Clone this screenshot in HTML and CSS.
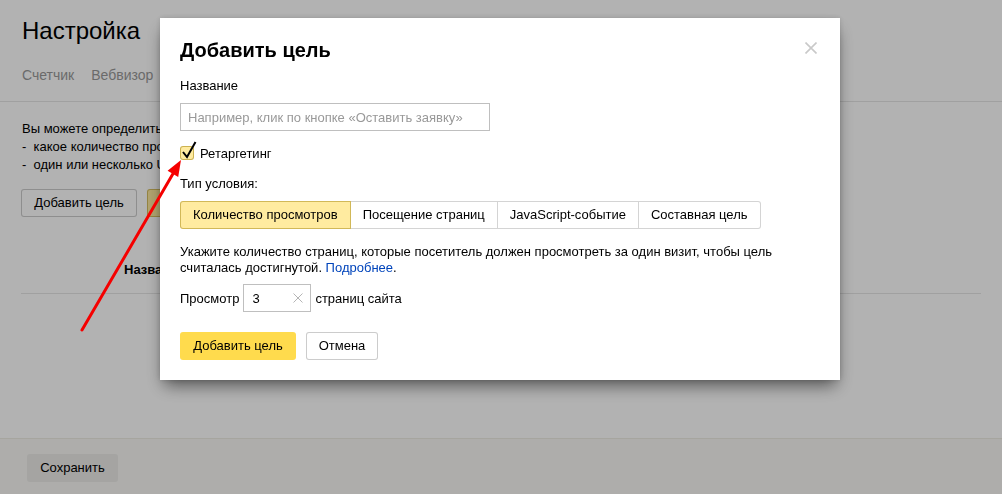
FILE: index.html
```html
<!DOCTYPE html>
<html lang="ru">
<head>
<meta charset="utf-8">
<title>Настройка — цели</title>
<link rel="stylesheet" href="styles.css">
</head>
<body>
<div class="page">
  <header class="head">
    <h1 class="head-title">Настройка</h1>
    <nav class="head-tabs">
      <span class="head-tab">Счетчик</span>
      <span class="head-tab">Вебвизор</span>
      <span class="head-tab">Цели</span>
      <span class="head-tab">Фильтры</span>
    </nav>
  </header>
  <main class="content">
    <p class="intro">Вы можете определить цели, достижение которых будет означать, что сайт работает эффективно:<br>-&nbsp; какое количество просмотров страниц должен совершить посетитель;<br>-&nbsp; один или несколько URL страниц, которые должен посетить посетитель.</p>
    <div class="actions">
      <button class="btn btn-add">Добавить цель</button>
      <button class="btn btn-soft">Добавить составную цель</button>
    </div>
    <div class="table-head"><span class="th">Название</span></div>
  </main>
  <footer class="foot">
    <button class="btn btn-gray">Сохранить</button>
  </footer>
</div>

<div class="overlay">
  <div class="modal">
    <button class="modal-close" aria-label="Закрыть">
      <svg width="12" height="12" viewBox="0 0 12 12"><path d="M0.5 0.5 L11.5 11.5 M11.5 0.5 L0.5 11.5" stroke="#c9c9c9" stroke-width="1.6" fill="none"/></svg>
    </button>
    <h2 class="modal-title">Добавить цель</h2>
    <div class="label">Название</div>
    <div class="input input-wide"><span class="placeholder">Например, клик по кнопке «Оставить заявку»</span></div>
    <label class="check">
      <span class="check-box">
        <svg class="check-mark" width="18" height="20" viewBox="0 0 18 20"><path d="M3 11 L7 16 L15.5 1" stroke="#000" stroke-width="2" fill="none" stroke-linejoin="miter"/></svg>
      </span>
      <span class="check-text">Ретаргетинг</span>
    </label>
    <div class="label label-type">Тип условия:</div>
    <div class="seg">
      <span class="seg-item seg-on">Количество просмотров</span>
      <span class="seg-item">Посещение страниц</span>
      <span class="seg-item">JavaScript-событие</span>
      <span class="seg-item">Составная цель</span>
    </div>
    <p class="desc">Укажите количество страниц, которые посетитель должен просмотреть за один визит, чтобы цель считалась достигнутой. <a class="link" href="#">Подробнее</a>.</p>
    <div class="views">
      <span>Просмотр</span>
      <div class="input input-small">
        <span class="value">3</span>
        <svg class="clear" width="10" height="10" viewBox="0 0 10 10"><path d="M0.5 0.5 L9.5 9.5 M9.5 0.5 L0.5 9.5" stroke="#b5b5b5" stroke-width="1" fill="none"/></svg>
      </div>
      <span>страниц сайта</span>
    </div>
    <div class="modal-actions">
      <button class="btn btn-yellow">Добавить цель</button>
      <button class="btn btn-white">Отмена</button>
    </div>
  </div>
</div>

<svg class="annotation" width="1002" height="494" viewBox="0 0 1002 494">
  <line x1="82" y1="330" x2="174" y2="172" stroke="#f50000" stroke-width="3" stroke-linecap="round"/>
  <polygon points="181,160 178.2,177 167.6,170.8" fill="#f50000"/>
</svg>
</body>
</html>
```

FILE: styles.css
```css
* { box-sizing: border-box; }

html, body {
  margin: 0;
  padding: 0;
  height: 100%;
}

body {
  font-family: "Liberation Sans", Arial, sans-serif;
  font-size: 13px;
  color: #000;
  background: #fff;
  overflow: hidden;
}

.page {
  display: flex;
  flex-direction: column;
  height: 100vh;
}

.head {
  height: 102px;
  border-bottom: 1px solid #e5e5e5;
  padding: 17px 22px 0;
  flex: none;
}

.head-title {
  margin: 0;
  font-size: 24px;
  font-weight: normal;
  line-height: 28px;
}

.head-tabs {
  display: flex;
  gap: 17px;
  margin-top: 22px;
  font-size: 14px;
  line-height: 16px;
  color: #999;
}

.content {
  flex: 1;
  padding: 18px 21px 0;
}

.intro {
  margin: 0;
  line-height: 18px;
  padding-left: 1px;
  white-space: nowrap;
}

.actions {
  display: flex;
  gap: 10px;
  margin-top: 15px;
}

.btn {
  font-family: inherit;
  font-size: 13px;
  height: 28px;
  padding: 0 13px;
  border-radius: 3px;
  border: 1px solid rgba(0,0,0,0.2);
  background: #fff;
  color: #000;
  line-height: 26px;
  cursor: pointer;
}

.btn-add {
  width: 116px;
  padding: 0;
}

.btn-soft {
  background: #ffeba0;
  border-color: rgba(153,122,0,0.4);
}

.table-head {
  margin-top: 30px;
  height: 47px;
  line-height: 46px;
  border-bottom: 1px solid #e5e5e5;
  padding-left: 103px;
}

.th { font-weight: bold; }

.foot {
  flex: none;
  height: 56px;
  background: #f9f8f5;
  border-top: 1px solid #eeede4;
  padding: 15px 27px 0;
}

.btn-gray {
  width: 91px;
  background: #ecebe9;
  border-color: transparent;
  padding: 0;
}

/* Modal */
.overlay {
  position: fixed;
  inset: 0;
  background: rgba(0,0,0,0.3);
  display: flex;
  justify-content: center;
  align-items: flex-start;
  padding: 18px 2px 0 0;
}

.modal {
  position: relative;
  width: 680px;
  background: #fff;
  padding: 20px;
  box-shadow: 0 9px 16px -4px rgba(0,0,0,0.55), 0 0 5px rgba(0,0,0,0.15);
}

.modal-close {
  position: absolute;
  top: 24px;
  right: 23px;
  width: 12px;
  height: 12px;
  padding: 0;
  border: 0;
  background: none;
  display: block;
}
.modal-close svg { display: block; }

.modal-title {
  margin: 0;
  font-size: 20px;
  font-weight: bold;
  line-height: 24px;
}

.label {
  margin-top: 16px;
  line-height: 16px;
}

.input {
  border: 1px solid #bfbfbf;
  height: 28px;
  display: flex;
  align-items: center;
}

.input-wide {
  width: 310px;
  margin-top: 9px;
  padding-left: 7px;
}

.placeholder { color: #999; }

.check {
  display: flex;
  align-items: center;
  margin-top: 15px;
  height: 14px;
}

.check-box {
  position: relative;
  width: 14px;
  height: 14px;
  border-radius: 3px;
  background: #ffeba0;
  border: 1px solid rgba(153,122,0,0.5);
}

.check-mark {
  position: absolute;
  left: -1px;
  top: -6px;
}

.check-text {
  margin-left: 6px;
  line-height: 16px;
  padding-top: 1px;
}

.label-type { margin-top: 16px; }

.seg {
  display: flex;
  margin-top: 9px;
  height: 28px;
}

.seg-item {
  line-height: 26px;
  padding: 0 12px;
  border: 1px solid rgba(0,0,0,0.17);
  border-left-width: 0;
  background: #fff;
}
.seg-item:first-child {
  border-left-width: 1px;
  border-radius: 3px 0 0 3px;
}
.seg-item:last-child { border-radius: 0 3px 3px 0; }

.seg-on {
  background: #ffeba0;
  border-color: rgba(153,122,0,0.45);
}

.desc {
  margin: 15px 0 0;
  line-height: 16px;
}

.link {
  color: #04b;
  text-decoration: none;
}

.views {
  display: flex;
  align-items: center;
  gap: 4px;
  margin-top: 8px;
}

.input-small {
  width: 68px;
  padding: 0 7px 0 8px;
  justify-content: space-between;
}

.clear { display: block; }

.modal-actions {
  display: flex;
  gap: 10px;
  margin-top: 20px;
}

.btn-yellow {
  width: 116px;
  padding: 0;
  background: #ffdb4d;
  border-color: transparent;
}

.btn-white {
  width: 72px;
  padding: 0;
}

.annotation {
  position: fixed;
  left: 0;
  top: 0;
  pointer-events: none;
}
```
